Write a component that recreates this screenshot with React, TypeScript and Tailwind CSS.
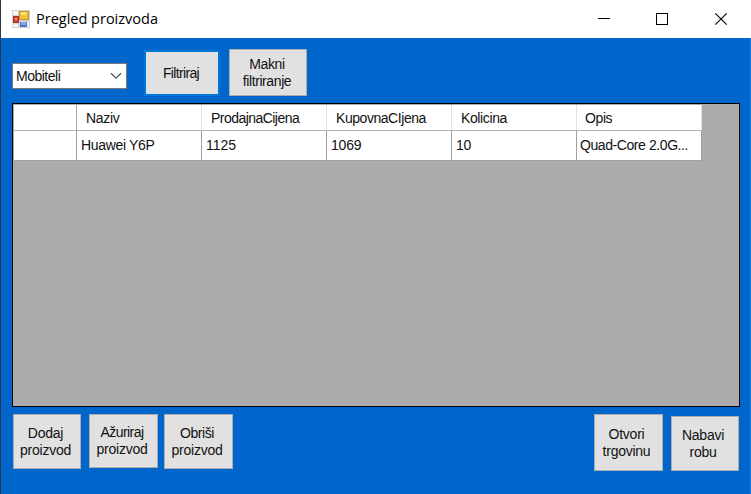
import type { ReactNode } from "react";

function Button({ className, children }: { className: string; children: ReactNode }) {
  return (
    <button
      className={
        "flex shrink-0 flex-col items-center justify-center whitespace-nowrap bg-[#e1e1e1] text-center text-[14px] leading-[17px] text-[#111] " +
        className
      }
    >
      {children}
    </button>
  );
}

function AppIcon() {
  return (
    <svg width="18" height="18" viewBox="0 0 18 18" shapeRendering="crispEdges">
      <rect width="18" height="18" fill="#d4d4d4" />
      <rect x="1" y="1" width="5" height="4" fill="#f6f6f6" />
      <rect x="1" y="14" width="5" height="3" fill="#f3f3f3" />
      <rect x="15" y="12" width="2" height="5" fill="#f3f3f3" />
      <rect x="1" y="6" width="6" height="7" fill="#b4302a" />
      <rect x="2" y="7" width="4" height="5" fill="#cf4238" />
      <rect x="3" y="8" width="2" height="2" fill="#ee9a90" />
      <rect x="7" y="1" width="10" height="9" fill="#c39420" />
      <rect x="8" y="2" width="8" height="7" fill="#f3c336" />
      <rect x="9" y="2" width="5" height="3" fill="#ffe07a" />
      <rect x="8" y="12" width="7" height="5" fill="#4a78cf" />
      <rect x="9" y="12" width="5" height="3" fill="#7eacf2" />
    </svg>
  );
}

const headers = [
  { text: "Naziv", cls: "tracking-[-0.3px]" },
  { text: "ProdajnaCijena", cls: "tracking-[-0.54px]" },
  { text: "KupovnaCIjena", cls: "tracking-[-0.45px]" },
  { text: "Kolicina", cls: "tracking-[-0.38px]" },
  { text: "Opis", cls: "-ml-px tracking-[-0.4px]" },
];

const cells = [
  { text: "Huawei Y6P", cls: "tracking-[-0.34px]" },
  { text: "1125", cls: "tracking-[0px]" },
  { text: "1069", cls: "tracking-[-0.2px]" },
  { text: "10", cls: "tracking-[-0.2px]" },
  { text: "Quad-Core 2.0G...", cls: "-ml-px tracking-[-0.42px]" },
];

export default function App() {
  return (
    <div className="flex h-[494px] w-[751px] flex-col overflow-hidden border-l border-[#26384c] bg-[#0066cc] font-['Liberation_Sans',Arial,sans-serif] text-[14px] text-[#111]">
      <header className="flex h-[38px] shrink-0 items-center bg-white pl-[11px]">
        <AppIcon />
        <h1 className="ml-[6px] font-['Open_Sans','Noto_Sans',sans-serif] text-[14.5px] leading-[20px] text-black">
          Pregled proizvoda
        </h1>
        <div className="ml-auto flex items-center">
          <svg width="153" height="38" viewBox="0 0 153 38" fill="none" stroke="#000">
            <path d="M0 18.5H12M58.5 13.5H69.5V24.5H58.5Z" shapeRendering="crispEdges" />
            <path d="M117.3 13.3L128.7 24.7M128.7 13.3L117.3 24.7" strokeWidth="1.1" />
          </svg>
        </div>
      </header>

      <main className="flex min-h-0 flex-1 flex-col border-r border-[#1a80e0] pl-[11px] pr-[10px] pt-[11px]">
        <div className="flex h-[54px] shrink-0 items-start">
          <div className="mt-[14px] flex h-[26px] w-[115px] shrink-0 items-center justify-between border border-[#7a7a7a] bg-white pl-[3px] pr-[4px]">
            <span className="pb-px leading-[16px] tracking-[-0.5px]">Mobiteli</span>
            <svg width="12" height="8" viewBox="0 0 12 8" fill="none" stroke="#555" strokeWidth="1.3">
              <path d="M1 1.2L6 6.2L11 1.2" />
            </svg>
          </div>
          <Button className="ml-[17px] mt-px h-[46px] w-[76px] border-2 border-[#0078d7] pr-[2px] tracking-[-0.65px]">
            <span>Filtriraj</span>
          </Button>
          <Button className="ml-[9px] h-[47px] w-[78px] border border-[#adadad] pr-[2px] tracking-[-0.4px]">
            <span>Makni</span>
            <span>filtriranje</span>
          </Button>
        </div>

        <div className="h-[304px] w-[728px] shrink-0 border border-black bg-[#ababab] pl-px pt-px">
          <div className="flex h-[26px] w-[688px] border-b border-[#b4b4b4]">
            <div className="w-[63px] border-r border-[#a8a8a8] bg-white" />
            {headers.map((h) => (
              <div
                key={h.text}
                className="flex w-[125px] items-center border-r border-[#e2e2e2] bg-white pl-[9px] pt-[2px]"
              >
                <span className={h.cls}>{h.text}</span>
              </div>
            ))}
          </div>
          <div className="flex h-[30px] w-[688px] border-b border-[#a0a0a0]">
            <div className="w-[63px] border-r border-[#a0a0a0] bg-white" />
            {cells.map((c) => (
              <div
                key={c.text}
                className="flex w-[125px] items-center whitespace-nowrap border-r border-[#a0a0a0] bg-white pl-[4px]"
              >
                <span className={c.cls}>{c.text}</span>
              </div>
            ))}
          </div>
        </div>

        <div className="flex items-start pl-px pt-[7px]">
          <Button className="h-[55px] w-[68px] border border-[#adadad] pr-[3px] tracking-[-0.25px]">
            <span>Dodaj</span>
            <span>proizvod</span>
          </Button>
          <Button className="ml-[8px] h-[54px] w-[69px] border border-[#adadad] pr-[3px] tracking-[-0.25px]">
            <span className="tracking-[-0.55px]">Ažuriraj</span>
            <span>proizvod</span>
          </Button>
          <Button className="ml-[6px] h-[55px] w-[69px] border border-[#adadad] pr-[3px] tracking-[-0.25px]">
            <span className="tracking-[-0.45px]">Obriši</span>
            <span>proizvod</span>
          </Button>
          <Button className="ml-auto h-[57px] w-[69px] border border-[#adadad] pr-[4px] tracking-[-0.25px]">
            <span>Otvori</span>
            <span>trgovinu</span>
          </Button>
          <Button className="ml-[8px] mr-px mt-[2px] h-[55px] w-[68px] border border-[#adadad] pr-[4px] pt-px tracking-[-0.25px]">
            <span>Nabavi</span>
            <span>robu</span>
          </Button>
        </div>
      </main>
    </div>
  );
}
